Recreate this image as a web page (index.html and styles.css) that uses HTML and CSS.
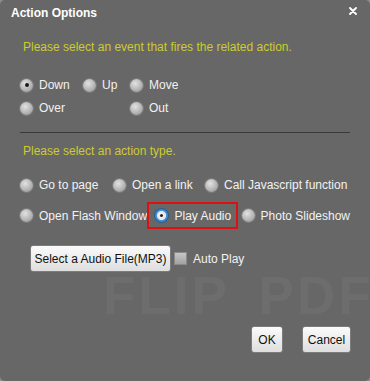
FILE: index.html
```html
<!doctype html>
<html lang="en">
    <head>
        <meta charset="utf-8">
        <title>Action Options</title>
        <link rel="stylesheet" href="styles.css">
    </head>
    <body>
        <div class="dialog">
            <div class="dialog__watermark">FLIP PDF</div>

            <div class="dialog__title">
                <span>Action Options</span>
                <svg class="dialog__close" width="8" height="8" viewBox="0 0 8 8">
                    <path d="M1 1 L7 7 M7 1 L1 7" stroke="#fff" stroke-width="1.8" stroke-linecap="round"/>
                </svg>
            </div>

            <div class="dialog__body">
                <p class="dialog__hint">Please select an event that fires the related action.</p>

                <div class="events">
                    <label class="option"><span class="radio radio--checked"></span>Down</label>
                    <label class="option"><span class="radio"></span>Up</label>
                    <label class="option"><span class="radio"></span>Move</label>
                    <label class="option"><span class="radio"></span>Over</label>
                    <span></span>
                    <label class="option"><span class="radio"></span>Out</label>
                </div>

                <div class="dialog__rule"></div>

                <p class="dialog__hint dialog__hint--second">Please select an action type.</p>

                <div class="actions">
                    <div class="actions__row">
                        <label class="option option--page"><span class="radio"></span>Go to page</label>
                        <label class="option option--link"><span class="radio"></span>Open a link</label>
                        <label class="option"><span class="radio"></span>Call Javascript function</label>
                    </div>
                    <div class="actions__row actions__row--tall">
                        <label class="option option--flash"><span class="radio"></span>Open Flash Window</label>
                        <label class="option option--marked"><span class="radio radio--focus"></span>Play Audio</label>
                        <label class="option option--slides"><span class="radio"></span>Photo Slideshow</label>
                    </div>
                </div>

                <div class="audio">
                    <button class="btn btn--file">Select a Audio File(MP3)</button>
                    <label class="check"><span class="check__box"></span>Auto Play</label>
                </div>
            </div>

            <div class="dialog__footer">
                <button class="btn btn--ok">OK</button>
                <button class="btn btn--cancel">Cancel</button>
            </div>
        </div>
    </body>
</html>
```

FILE: styles.css
```css
html {
    background: #8c8c8c;
}

body {
    margin: 0;
}

.dialog {
    background: #676767;
    border-radius: 5px;
    color: #f2f2f2;
    font-family: "Liberation Sans", Arial, sans-serif;
    font-size: 12px;
    height: 381px;
    overflow: hidden;
    position: relative;
    width: 370px;
}

.dialog__watermark {
    color: #6d6d6d;
    font-size: 53px;
    font-weight: bold;
    left: 103px;
    letter-spacing: 3px;
    position: absolute;
    top: 265px;
    white-space: nowrap;
    word-spacing: 12px;
}

.dialog__title {
    align-items: center;
    color: #fff;
    display: flex;
    font-weight: bold;
    height: 26px;
    justify-content: space-between;
    padding: 0 13px 0 11px;
    position: relative;
}

.dialog__close {
    margin-top: -5px;
}

.dialog__body {
    padding: 0 20px;
    position: relative;
}

.dialog__hint {
    color: #cccc2e;
    line-height: 16px;
    margin: 13px 0 0 3px;
}

.dialog__hint--second {
    margin-top: 10px;
}

.events {
    display: grid;
    grid-template-columns: 63px 47px auto;
    margin-top: 20px;
    row-gap: 3px;
}

.option {
    align-items: center;
    display: flex;
    height: 20px;
    white-space: nowrap;
}

.radio {
    background: radial-gradient(circle at 40% 35%, #e2e2e2 0%, #bdbdbd 45%, #8f8f8f 100%);
    border-radius: 50%;
    box-shadow: 0 0 0 1px #7a7a7a;
    flex: none;
    height: 13px;
    margin-right: 6px;
    position: relative;
    width: 13px;
}

.radio--checked::after {
    background: #1a1a1a;
    border-radius: 50%;
    content: "";
    height: 4px;
    left: 4.5px;
    position: absolute;
    top: 4.5px;
    width: 4px;
}

.radio--focus {
    background: radial-gradient(circle, #fafafa 0%, #e6e6e6 45%, #3f8fd8 55%, #2a6fb8 100%);
    box-shadow: 0 0 0 1px #2d5e8e;
}

.radio--focus::after {
    background: #222;
    border-radius: 50%;
    content: "";
    height: 3px;
    left: 5px;
    position: absolute;
    top: 5px;
    width: 3px;
}

.dialog__rule {
    background: #3a3a3a;
    height: 1px;
    margin-top: 14px;
    width: 330px;
}

.actions {
    margin-top: 16px;
}

.actions__row {
    display: flex;
}

.actions__row--tall {
    align-items: center;
    height: 27px;
    margin-top: 7px;
}

.option--page {
    width: 93px;
}

.option--link {
    width: 92px;
}

.option--flash {
    width: 132px;
}

.option--marked {
    border: 2px solid #e01010;
    box-sizing: border-box;
    height: 27px;
    padding-left: 6px;
    width: 93px;
}

.option--slides {
    margin-left: 4px;
}

.audio {
    align-items: center;
    display: flex;
    margin: 16px 0 0 10px;
}

.btn {
    background: linear-gradient(#fbfbfb, #dedede);
    border: 1px solid #7c7c7c;
    border-radius: 3px;
    box-sizing: border-box;
    color: #111;
    font-family: "Liberation Sans", Arial, sans-serif;
    font-size: 12px;
    height: 27px;
    padding: 0;
}

.btn--file {
    width: 141px;
}

.check {
    align-items: center;
    display: flex;
    margin-left: 3px;
}

.check__box {
    background: linear-gradient(#c6c6c6, #a2a2a2);
    border: 1px solid #8a8a8a;
    box-sizing: border-box;
    height: 13px;
    margin-right: 6px;
    width: 13px;
}

.dialog__footer {
    display: flex;
    gap: 19px;
    justify-content: flex-end;
    margin-top: 54px;
    padding-right: 19px;
    position: relative;
}

.btn--ok {
    width: 32px;
}

.btn--cancel {
    width: 49px;
}
```
